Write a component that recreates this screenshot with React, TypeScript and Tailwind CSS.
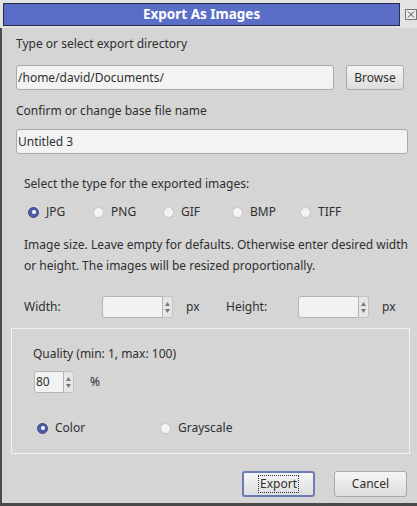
import React from 'react';

function Radio({ checked, label, className = '' }: { checked?: boolean; label: string; className?: string }) {
  return (
    <div className={`flex items-center ${className}`}>
      {checked ? (
        <span className="w-[11px] h-[11px] rounded-full bg-[#4e5ca6] border border-[#3e4a8c] flex items-center justify-center">
          <span className="w-[4px] h-[4px] rounded-full bg-white" />
        </span>
      ) : (
        <span className="w-[11px] h-[11px] rounded-full bg-[#f3f3f3] border border-[#c4c4c4]" />
      )}
      <span className="ml-[7px]">{label}</span>
    </div>
  );
}

function Spin({ value = '', width }: { value?: string; width: string }) {
  return (
    <div className="flex items-stretch h-[22px]">
      <div className={`${width} bg-[#f2f2f2] border border-[#b4b4b4] rounded-l-[3px] flex items-center px-[1px]`}>{value}</div>
      <div className="w-[10px] bg-[#e6e6e6] border border-l-0 border-[#c2c2c2] rounded-r-[3px] flex flex-col items-center justify-center gap-[3px]">
        <svg width="5" height="4" viewBox="0 0 5 4"><path d="M2.5 0L5 4H0z" fill="#777" /></svg>
        <svg width="5" height="4" viewBox="0 0 5 4"><path d="M0 0H5L2.5 4z" fill="#777" /></svg>
      </div>
    </div>
  );
}

export default function App() {
  return (
    <div
      className="w-[417px] h-[506px] bg-[#d5d5d5] text-[#2f2f2f] text-[12px] overflow-hidden flex flex-col"
      style={{ fontFamily: '"Noto Sans", "Open Sans", sans-serif' }}
    >
      {/* title bar */}
      <div className="h-[28px] bg-[#e3e3e3] flex items-start pt-[3px] pl-[3px] shrink-0">
        <div className="w-[401px] h-[23px] bg-[#5a6ec8] border border-[#2b2d45] flex items-center justify-center text-white font-bold text-[13.5px]">
          Export As Images
        </div>
        <div className="ml-[5px] mt-[6px] w-[12px] h-[11px] border border-[#777] bg-[#ececec] flex items-center justify-center">
          <svg width="8" height="7" viewBox="0 0 8 7"><path d="M1 0.5L7 6.5M7 0.5L1 6.5" stroke="#444" strokeWidth="1" /></svg>
        </div>
      </div>

      <div className="flex-1 border-l-2 border-b-[3px] border-[#4a4a4a] flex flex-col">
        <div className="mt-[7px] ml-[14px] leading-[18px]">Type or select export directory</div>
        <div className="mt-[12px] ml-[14px] flex items-center">
          <div className="w-[318px] h-[25px] bg-[#f3f3f3] border border-[#aaaaaa] rounded-[3px] flex items-center px-[1px]">
            /home/david/Documents/
          </div>
          <button className="ml-[12px] w-[58px] h-[25px] rounded-[3px] border border-[#a9a9a9] bg-gradient-to-b from-[#f5f5f5] to-[#dedede]">
            Browse
          </button>
        </div>

        <div className="mt-[12px] ml-[14px] leading-[18px]">Confirm or change base file name</div>
        <div className="mt-[9px] ml-[14px] w-[392px] h-[25px] bg-[#f3f3f3] border border-[#aaaaaa] rounded-[3px] flex items-center px-[1px]">
          Untitled 3
        </div>

        <div className="mt-[21px] ml-[22px] leading-[18px]">Select the type for the exported images:</div>
        <div className="mt-[10px] ml-[26px] h-[18px] flex items-center">
          <Radio checked label="JPG" className="w-[65px]" />
          <Radio label="PNG" className="w-[70px]" />
          <Radio label="GIF" className="w-[69px]" />
          <Radio label="BMP" className="w-[68px]" />
          <Radio label="TIFF" />
        </div>

        <div className="mt-[13px] ml-[22px] mr-[3px] leading-[21px]">
          Image size. Leave empty for defaults. Otherwise enter desired width or height. The images will be resized proportionally.
        </div>

        <div className="mt-[20px] ml-[22px] flex items-center">
          <span className="w-[78px]">Width:</span>
          <Spin width="w-[61px]" />
          <span className="ml-[13px] w-[40px]">px</span>
          <span className="w-[72px]">Height:</span>
          <Spin width="w-[61px]" />
          <span className="ml-[13px]">px</span>
        </div>

        <div className="mt-[10px] ml-[9px] w-[399px] h-[126px] border border-[#f2f2f2] flex flex-col">
          <div className="mt-[16px] ml-[21px] leading-[18px]">Quality (min: 1, max: 100)</div>
          <div className="mt-[8px] ml-[22px] flex items-center">
            <Spin value="80" width="w-[30px]" />
            <span className="ml-[16px]">%</span>
          </div>
          <div className="mt-[26px] ml-[25px] h-[18px] flex items-center">
            <Radio checked label="Color" className="w-[123px]" />
            <Radio label="Grayscale" />
          </div>
        </div>

        <div className="mt-[17px] flex justify-end pr-[10px] gap-[19px]">
          <button className="w-[73px] h-[26px] rounded-[3px] border-2 border-[#6d7ab4] bg-gradient-to-b from-[#f5f5f5] to-[#dedede] flex items-center justify-center">
            <span className="border border-dotted border-[#333] px-[1px] leading-[16px]">Export</span>
          </button>
          <button className="w-[73px] h-[26px] rounded-[3px] border border-[#a9a9a9] bg-gradient-to-b from-[#f5f5f5] to-[#dedede]">
            Cancel
          </button>
        </div>
      </div>
    </div>
  );
}
